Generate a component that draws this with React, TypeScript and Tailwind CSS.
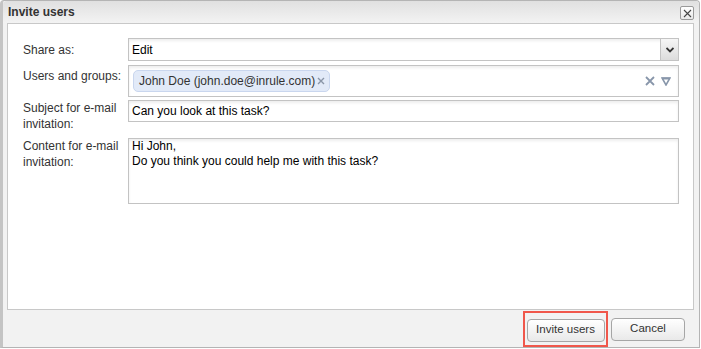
import React from "react";

const labelCls = "w-[105px] shrink-0 text-[12px] leading-[16px] text-[#333]";
const fieldBorder = "border border-[#c3c3c3] bg-white shadow-[inset_0_2px_3px_rgba(0,0,0,0.07)]";

export default function App() {
  return (
    <div className="w-[701px] h-[349px] bg-white" style={{ fontFamily: '"Liberation Sans", Arial, sans-serif' }}>
      <div className="w-[700px] h-[348px] border border-[#b4b4b4] border-l-[3px] border-l-[#c4c4c4] rounded-t-[4px] bg-[#f2f2f2] flex flex-col">
        {/* Title bar */}
        <div className="h-[22px] shrink-0 flex items-center justify-between pl-[5px] pr-[5px] bg-gradient-to-b from-[#e0e0e0] to-[#f3f3f3] rounded-t-[4px]">
          <span className="text-[12px] font-bold text-[#333]">Invite users</span>
          <div className="w-[14px] h-[14px] mt-[2px] border border-[#9a9a9a] rounded-[2px] bg-gradient-to-b from-white to-[#e8e8e8] flex items-center justify-center">
            <svg width="9" height="9" viewBox="0 0 9 9">
              <path d="M1 1 L8 8 M8 1 L1 8" stroke="#444" strokeWidth="1.1" />
            </svg>
          </div>
        </div>

        {/* Content panel */}
        <div className="ml-[4px] mr-[5px] h-[287px] shrink-0 border border-[#c8c8c8] bg-white pl-[15px] pr-[14px] pt-[14px]">
          {/* Share as */}
          <div className="flex items-center h-[23px]">
            <div className={labelCls}>Share as:</div>
            <div className={`flex-1 h-[23px] flex items-center ${fieldBorder}`}>
              <span className="flex-1 pl-[3px] text-[12px] text-black">Edit</span>
              <div className="w-[18px] h-full border-l border-[#c3c3c3] bg-gradient-to-b from-[#f6f6f6] to-[#dcdcdc] flex items-center justify-center">
                <svg width="8" height="6" viewBox="0 0 8 6">
                  <path d="M0.5 1 L4 4.5 L7.5 1" stroke="#333" strokeWidth="1.8" fill="none" />
                </svg>
              </div>
            </div>
          </div>

          {/* Users and groups */}
          <div className="flex items-start mt-[4px]">
            <div className={`${labelCls} pt-[3px]`}>Users and groups:</div>
            <div className={`flex-1 h-[32px] flex items-center pl-[4px] pr-[7px] ${fieldBorder}`}>
              <div className="h-[22px] flex items-center pl-[5px] pr-[4px] rounded-[5px] border border-[#c9d6ee] bg-[#e2eaf8] text-[12px] text-[#333]">
                John Doe (john.doe@inrule.com)
                <svg className="ml-[2px]" width="8" height="8" viewBox="0 0 8 8">
                  <path d="M1 1 L7 7 M7 1 L1 7" stroke="#8a96a8" strokeWidth="1.4" />
                </svg>
              </div>
              <div className="flex-1" />
              <svg width="10" height="10" viewBox="0 0 10 10">
                <path d="M1 1 L9 9 M9 1 L1 9" stroke="#8896aa" strokeWidth="1.8" />
              </svg>
              <svg className="ml-[6px]" width="10" height="9" viewBox="0 0 10 9">
                <path d="M1 1 H9 L5 8 Z" stroke="#8896aa" strokeWidth="1.6" fill="none" strokeLinejoin="miter" />
                <path d="M1 1.5 H9" stroke="#8896aa" strokeWidth="2" />
              </svg>
            </div>
          </div>

          {/* Subject */}
          <div className="flex items-start mt-[3px]">
            <div className={labelCls}>Subject for e-mail<br />invitation:</div>
            <div className={`flex-1 h-[22px] flex items-center pl-[3px] ${fieldBorder}`}>
              <span className="text-[12px] text-black">Can you look at this task?</span>
            </div>
          </div>

          {/* Content */}
          <div className="flex items-start mt-[6px]">
            <div className={labelCls}>Content for e-mail<br />invitation:</div>
            <div className={`flex-1 h-[66px] pl-[3px] text-[12px] leading-[15px] text-black ${fieldBorder}`}>
              Hi John,<br />Do you think you could help me with this task?
            </div>
          </div>
        </div>

        {/* Footer */}
        <div className="flex-1 flex items-center justify-end pr-[14px] pt-[1px]">
          <div className="border-2 border-[#f0574b] px-[1.5px] py-[3px]">
            <button className="w-[78px] h-[23px] rounded-[4px] border border-[#a6a6a6] bg-gradient-to-b from-white to-[#e9e9e9] text-[11.5px] text-[#333]">
              Invite users
            </button>
          </div>
          <button className="ml-[3px] w-[74px] h-[23px] rounded-[4px] border border-[#a6a6a6] bg-gradient-to-b from-white to-[#e9e9e9] text-[11.5px] text-[#333]">
            Cancel
          </button>
        </div>
      </div>
    </div>
  );
}
